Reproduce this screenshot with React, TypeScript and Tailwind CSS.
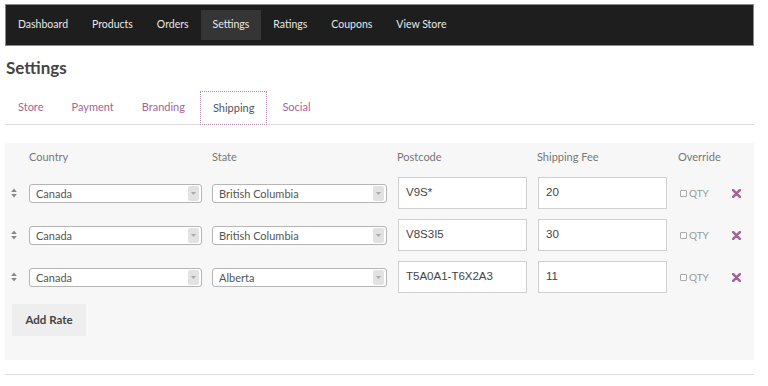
import React from "react";

const font = { fontFamily: "Lato, 'Open Sans', sans-serif" };

function SortIcon() {
  return (
    <svg width="6" height="10" viewBox="0 0 6 10" className="shrink-0">
      <path d="M3 0.5 L5.8 4 L0.2 4 Z" fill="#888" />
      <path d="M3 9.5 L5.8 6 L0.2 6 Z" fill="#888" />
    </svg>
  );
}

function Select({ value, width }: { value: string; width: string }) {
  return (
    <div className={`${width} h-[19px] bg-white border border-[#b5b5b5] rounded-[3px] flex items-center shrink-0 overflow-hidden`}>
      <span className="flex-1 pl-[6px] text-[11px] text-[#555] leading-none">{value}</span>
      <span className="w-[11px] h-[15px] mr-[2px] bg-[#e2e2e2] rounded-[2px] flex items-center justify-center">
        <svg width="5" height="3" viewBox="0 0 5 3"><path d="M0 0 L5 0 L2.5 3 Z" fill="#aaa" /></svg>
      </span>
    </div>
  );
}

function TextInput({ value }: { value: string }) {
  return (
    <div
      className="w-[129px] h-[32px] bg-white border border-[#d0d0d0] flex items-center pl-[7px] text-[11.5px] text-[#444] shrink-0"
      style={{ fontFamily: "'Liberation Sans', Arial, sans-serif" }}
    >
      {value}
    </div>
  );
}

function XIcon() {
  return (
    <svg width="9" height="9" viewBox="0 0 9 9">
      <path d="M1.2 1.2 L7.8 7.8 M7.8 1.2 L1.2 7.8" stroke="#a46497" strokeWidth="2.6" strokeLinecap="round" />
    </svg>
  );
}

const rows = [
  { country: "Canada", state: "British Columbia", postcode: "V9S*", fee: "20" },
  { country: "Canada", state: "British Columbia", postcode: "V8S3I5", fee: "30" },
  { country: "Canada", state: "Alberta", postcode: "T5A0A1-T6X2A3", fee: "11" },
];

export default function App() {
  const nav = ["Dashboard", "Products", "Orders", "Settings", "Ratings", "Coupons", "View Store"];
  const tabs = ["Store", "Payment", "Branding", "Shipping", "Social"];
  return (
    <div className="w-[768px] h-[386px] bg-white overflow-hidden" style={font}>
      <div className="ml-[5px] w-[749px] pt-[4px]">
        <div className="h-[42px] bg-[#1e1e1e] border border-[#8a8a8a] flex items-center">
          {nav.map((n) => (
            <div
              key={n}
              className={`h-[30px] px-[12px] flex items-center text-[10.5px] text-[#e8e8e8] ${n === "Settings" ? "bg-[#353535]" : ""}`}
            >
              {n}
            </div>
          ))}
        </div>

        <h1 className="mt-[11px] text-[17px] font-bold text-[#444] leading-[22px] pl-[1px]">Settings</h1>

        <div className="mt-[13px] flex items-end gap-[2px] border-b border-[#dcdcdc] h-[33px]">
          {tabs.map((t) => (
            <div
              key={t}
              className={`h-[33px] px-[12px] flex items-center text-[11px] ${
                t === "Shipping"
                  ? "text-[#555] bg-white border border-dotted border-[#b08aaa] -mb-[1px] h-[34px]"
                  : "text-[#a46497] border border-transparent"
              }`}
            >
              {t}
            </div>
          ))}
        </div>

        <div className="mt-[18px] bg-[#f7f7f7] h-[217px]">
          <div className="h-[29px] flex items-center text-[11px] text-[#777]">
            <div className="w-[24px]" />
            <div className="w-[183px]">Country</div>
            <div className="w-[185px]">State</div>
            <div className="w-[140px]">Postcode</div>
            <div className="w-[141px]">Shipping Fee</div>
            <div>Override</div>
          </div>
          {rows.map((r, i) => (
            <div key={i} className="h-[42px] flex items-center">
              <div className="w-[24px] flex justify-start pl-[6px]">
                <SortIcon />
              </div>
              <Select value={r.country} width="w-[173px]" />
              <div className="w-[10px]" />
              <Select value={r.state} width="w-[175px]" />
              <div className="w-[11px]" />
              <TextInput value={r.postcode} />
              <div className="w-[11px]" />
              <TextInput value={r.fee} />
              <div className="w-[13px]" />
              <div className="flex items-center gap-[2px] text-[10px] text-[#999] w-[52px]">
                <span className="w-[7px] h-[7px] border border-[#aaa] rounded-[1px] bg-white" />
                <span>QTY</span>
              </div>
              <XIcon />
            </div>
          ))}
          <div className="pl-[7px] pt-[6px]">
            <div className="w-[74px] h-[32px] bg-[#eeeeee] flex items-center justify-center text-[11.5px] font-bold text-[#444]">
              Add Rate
            </div>
          </div>
        </div>

        <div className="mt-[14px] border-t border-[#dcdcdc]" />
      </div>
    </div>
  );
}
